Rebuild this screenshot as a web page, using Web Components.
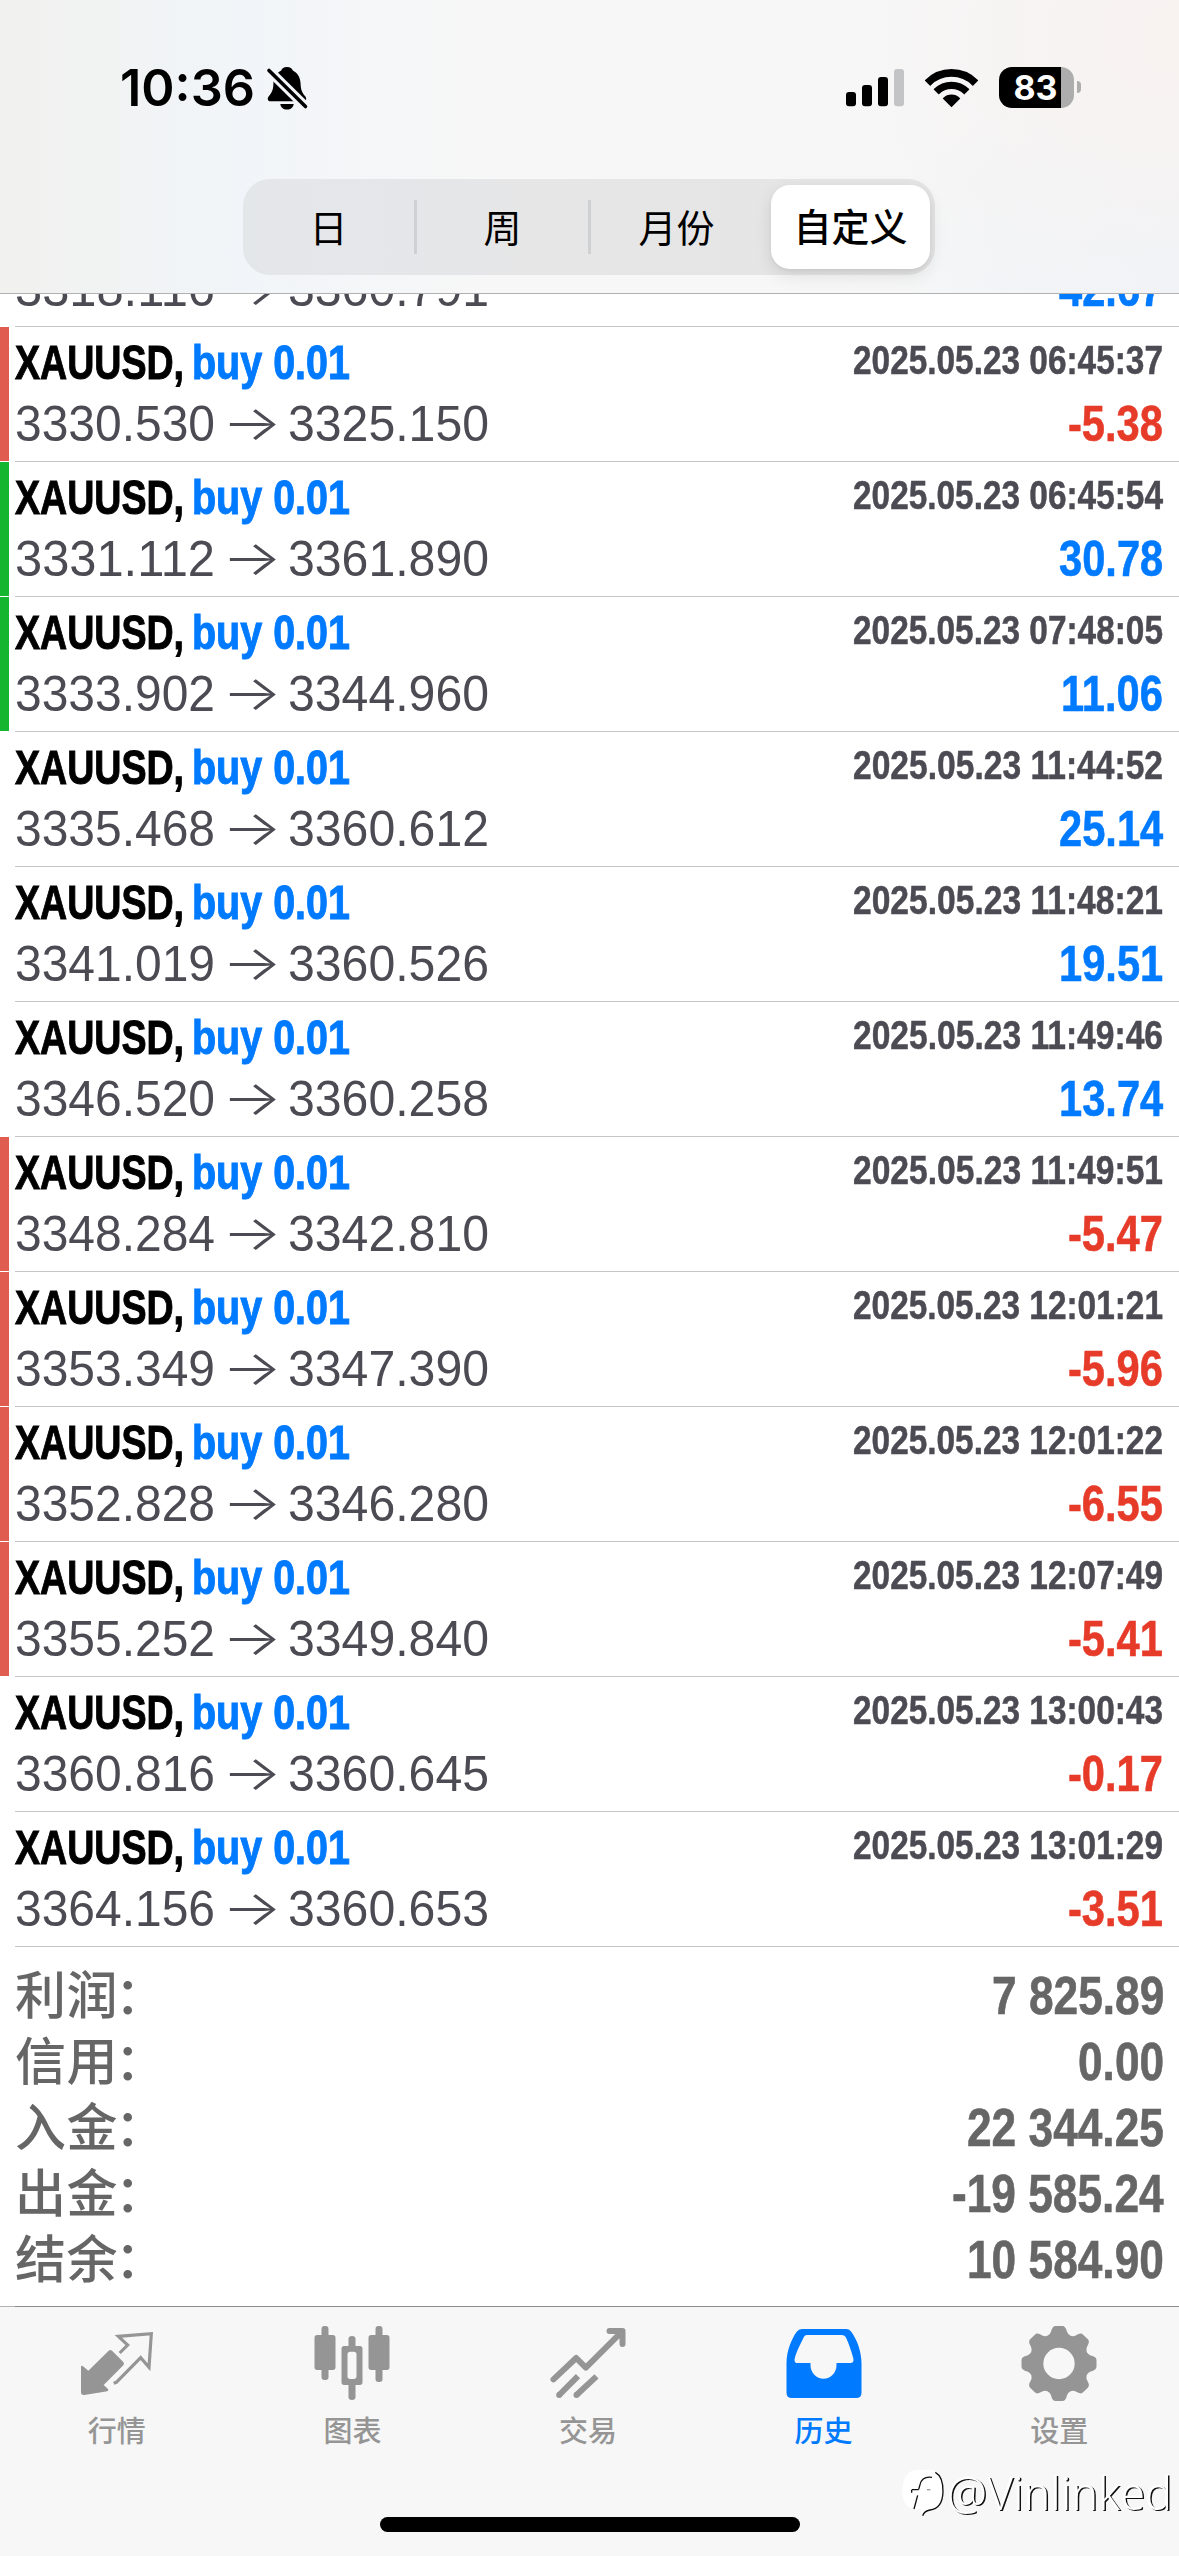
<!DOCTYPE html>
<html lang="zh-CN">
<head>
<meta charset="utf-8">
<title>历史</title>
<style>
html,body{margin:0;padding:0;background:#fff}
body{width:1179px;height:2556px;overflow:hidden;font-family:"Liberation Sans","Noto Sans CJK SC",sans-serif}
</style>
</head>
<body>
<history-app></history-app>
<script>
const define = (name, html, setup) => {
  const t = document.createElement('template');
  t.innerHTML = html;
  customElements.define(name, class extends HTMLElement {
    connectedCallback() {
      if (this.shadowRoot) return;
      const root = this.attachShadow({ mode: 'open' });
      root.append(t.content.cloneNode(true));
      if (setup) setup(this, root);
    }
  });
};

/* Condensed text: squeezes its slotted text by the factor k, box included. */
define('fit-text', `<style>
:host{display:inline-block;white-space:pre}
span{display:inline-block;transform-origin:0 50%}
</style><span><slot></slot></span>`, (el, root) => {
  const s = root.querySelector('span');
  const natural = s.getBoundingClientRect().width;
  const k = el.hasAttribute('w') ? el.getAttribute('w') / natural : +el.getAttribute('k');
  el.style.width = natural * k + 'px';
  s.style.transform = `scaleX(${k})`;
});

define('status-bar', `<style>
:host{display:flex;padding:58px 0 0 120px;height:58px;align-items:flex-start}
.time{font:600 51px/60px Inter,sans-serif;color:#000;width:142px;height:60px}
svg{display:block}
.bell{margin:4px 0 0 0}
.right{display:flex;margin-left:auto;padding:7px 98px 0 0}
.bat{display:flex;margin-left:20px;margin-top:2px}
.cell{width:75px;height:41px;border-radius:13px;background:linear-gradient(90deg,#000 62px,#adadad 62px);color:#fff;font:700 34px/41px Inter,sans-serif;text-align:center;box-sizing:border-box;padding-right:2px}
.cap{width:4px;height:12px;margin:14px 0 0 3px;border-radius:0 4px 4px 0;background:#adadad}
</style>
<div class="time"><fit-text w="135">10:36</fit-text></div>
<svg class="bell" width="50" height="52" viewBox="262 62 50 52"><defs><mask id="m"><rect x="262" y="62" width="50" height="52" fill="#fff"/><path d="M262 63.5L314 115" stroke="#000" stroke-width="9.5"/></mask></defs>
<g mask="url(#m)"><path d="M287 67C283.8 67 281.6 68.6 281.2 70.6C275.5 73.4 273.6 78.5 273.4 84C273.2 90.5 271.5 93 269 96C266.6 99 268 101.3 270.8 101.3H303.2C306 101.3 307.4 99 305 96C302.500 93 300.800 90.500 300.600 84C300.400 78.500 298.500 73.400 292.800 70.600C292.400 68.600 290.200 67 287 67Z"/><path d="M280.300 104H293.700C293.300 107.400 290.800 109.600 287 109.600S280.700 107.400 280.300 104Z"/></g>
<path d="M269 70.500L305.500 106.500" stroke="#000" stroke-width="3.600" stroke-linecap="round"/></svg>
<div class="right">
<svg width="134" height="46" viewBox="845 65 134 46">
<rect x="846" y="92" width="10" height="14.300" rx="3"/><rect x="862" y="85" width="10" height="21.300" rx="3"/><rect x="878" y="77" width="10" height="29.300" rx="3"/><rect x="894" y="69" width="10" height="37.300" rx="3" fill="#c3c4c5"/>
<clipPath id="w"><path d="M951.500 107.300L925 80.800Q923 69 938 60H965Q980 69 978 80.800Z"/></clipPath>
<g clip-path="url(#w)"><circle cx="951.500" cy="106.300" r="11.800"/><g fill="none" stroke="#000"><circle cx="951.500" cy="106.300" r="21" stroke-width="7.300"/><circle cx="951.500" cy="106.300" r="33.400" stroke-width="7.800"/></g></g>
</svg>
<div class="bat"><div class="cell">83</div><div class="cap"></div></div>
</div>`);

define('segmented-control', `<style>
:host{display:grid;grid-template-columns:174px 174px 174px 170px;width:692px;height:96px;margin:63px auto 0 243px;border-radius:27px;background:linear-gradient(90deg,#e4e7ea,#e5e6e8 30%,#e6e6e6 45%,#e5e5e6);align-items:center;color:#000;font:400 38px/51px "Noto Sans CJK SC",sans-serif}
div{display:flex;justify-content:center;height:54px;box-sizing:border-box;border-right:3px solid transparent}
div.line{border-color:#cfd0d2}
div.on{height:84px;border:0;width:159px;justify-self:end;margin-right:5px;border-radius:19px;background:#fff;line-height:80px;font-weight:500;box-shadow:0 6px 18px rgba(0,0,0,.1),0 2px 4px rgba(0,0,0,.05)}
</style>
<div class="line">日</div><div class="line">周</div><div>月份</div><div class="on">自定义</div>`);

define('app-header', `<style>
:host{display:flex;flex-direction:column;height:293px;border-bottom:1px solid #b1b1b2;
background:radial-gradient(circle 330px at 1179px 40px,#f8f2f0,#f8f2f000),radial-gradient(ellipse 300px 200px at 1179px 260px,#eef3f8,#eef3f800),linear-gradient(90deg,#f1f1ef 0,#f1f3f3 110px,#f1f5f9 240px,#f4f6f8 350px,#f7f7f7 480px,#f7f7f7 820px,#f4f5f6 1179px)}
</style><status-bar></status-bar><segmented-control></segmented-control>`);

define('deal-row', `<style>
:host{display:flex;height:135px;flex:none;background:#fff}
:host([partial]){height:33px;overflow:hidden;align-items:flex-end}
:host([partial]) .a{display:none}
:host([partial]) .body{height:70px}
i{width:9px;height:134px;flex:none;margin-right:6px;background:var(--mark,transparent)}
.body{flex:1;border-bottom:1px solid #c6c6c8;padding-right:16px;font-size:50px}
.a,.b{display:flex;justify-content:space-between;height:60px;align-items:flex-start}
.a{padding-top:4px;line-height:60px;font-weight:700;color:#000;font-size:49px}
.t{display:flex}
.sym,.side{-webkit-text-stroke:1px currentColor;margin-top:1px}
.side{color:#007aff;margin-left:8px}
.date{font-size:40px;line-height:58px;color:#4c4b53;-webkit-text-stroke:.5px currentColor}
.b{line-height:66px;color:#4c4b53}
.b .t{font-weight:400}
.arrow{font-family:Inter,sans-serif;font-weight:300;font-size:48px;margin:-1px 6px 0 7px}
.v{font-weight:700;-webkit-text-stroke:.6px currentColor}
</style><i></i><div class="body">
<div class="a"><div class="t"><fit-text class="sym" w="169"></fit-text><fit-text class="side" w="158"></fit-text></div><fit-text class="date" w="310"></fit-text></div>
<div class="b"><div class="t"><fit-text class="p1" w="200"></fit-text><fit-text class="arrow" w="60">→</fit-text><fit-text class="p2" w="201"></fit-text></div><fit-text class="v" k=".833"></fit-text></div>
</div>`, (el, root) => {
  const set = (sel, text) => {
    const old = root.querySelector(sel), n = old.cloneNode();
    n.textContent = text;
    old.replaceWith(n);
  };
  const v = el.getAttribute('profit');
  if (el.hasAttribute('partial')) {
    root.querySelector('.a').remove();
  } else {
    set('.sym', 'XAUUSD,');
    set('.side', 'buy 0.01');
    set('.date', '2025.05.23 ' + el.getAttribute('time'));
  }
  set('.p1', el.getAttribute('open-price'));
  set('.p2', el.getAttribute('close-price'));
  set('.v', v);
  root.querySelector('.v').style.color = v[0] === '-' ? '#e73b2a' : '#007aff';
  const mark = { sl: '#e05c50', tp: '#16b530' }[el.getAttribute('mark')];
  if (mark) el.style.setProperty('--mark', mark);
});

define('deal-list', `<style>
:host{display:flex;flex-direction:column;height:1653px;overflow:hidden}
</style>`, (el, root) => {
  [
    ['3318.116', '3360.791', '', '42.67', ''],
    ['3330.530', '3325.150', '06:45:37', '-5.38', 'sl'],
    ['3331.112', '3361.890', '06:45:54', '30.78', 'tp'],
    ['3333.902', '3344.960', '07:48:05', '11.06', 'tp'],
    ['3335.468', '3360.612', '11:44:52', '25.14', ''],
    ['3341.019', '3360.526', '11:48:21', '19.51', ''],
    ['3346.520', '3360.258', '11:49:46', '13.74', ''],
    ['3348.284', '3342.810', '11:49:51', '-5.47', 'sl'],
    ['3353.349', '3347.390', '12:01:21', '-5.96', 'sl'],
    ['3352.828', '3346.280', '12:01:22', '-6.55', 'sl'],
    ['3355.252', '3349.840', '12:07:49', '-5.41', 'sl'],
    ['3360.816', '3360.645', '13:00:43', '-0.17', ''],
    ['3364.156', '3360.653', '13:01:29', '-3.51', '']
  ].forEach(([o, c, t, p, m]) => {
    const r = document.createElement('deal-row');
    r.setAttribute('open-price', o);
    r.setAttribute('close-price', c);
    r.setAttribute('time', t);
    r.setAttribute('profit', p);
    r.setAttribute('mark', m);
    if (!t) r.setAttribute('partial', '');
    root.append(r);
  });
});

define('account-summary', `<style>
:host{display:block;height:359px;box-sizing:border-box;padding:16px 15px 0;color:#666}
div{display:flex;justify-content:space-between;height:66px}
span{font:500 51px/59px "Noto Sans CJK SC",sans-serif;letter-spacing:.5px}
b{font-weight:500;margin-left:-3px}
fit-text{font:700 53px/66px "Liberation Sans",sans-serif;-webkit-text-stroke:.6px currentColor}
</style>
<div><span>利润<b>：</b></span><fit-text k=".835">7 825.89</fit-text></div>
<div><span>信用<b>：</b></span><fit-text k=".835">0.00</fit-text></div>
<div><span>入金<b>：</b></span><fit-text k=".835">22 344.25</fit-text></div>
<div><span>出金<b>：</b></span><fit-text k=".835">-19 585.24</fit-text></div>
<div><span>结余<b>：</b></span><fit-text k=".835">10 584.90</fit-text></div>`);

define('tab-item', `<style>
:host{display:flex;flex-direction:column;align-items:center;color:#959595;font:500 29px/38px "Noto Sans CJK SC",sans-serif}
:host([active]){color:#007aff}
::slotted(svg){display:block;width:90px;height:90px}
</style><slot name="icon"></slot><span><slot></slot></span>`);

define('water-mark', `<style>
:host{display:flex;position:absolute;left:902px;top:162px;align-items:flex-start}
svg{display:block;margin-top:2px;flex:none}
fit-text{font:300 46px/54px "Noto Sans","Open Sans",sans-serif;color:#fff;text-shadow:1.5px 1px .5px #111;margin:-3px 0 0 1px}
</style>
<svg width="44" height="50" viewBox="428 546 132 150"><path d="M470 546H520Q552 560 552 610Q552 660 512 667Q498 670 490 684L484 664Q430 668 429 612Q429 550 470 546Z" fill="#fff"/><path d="M528 553Q552 566 551 612Q549 662 512 666Q495 669 490 683M518 568Q488 564 482 590L478 604M457 605H478M457 614V606M475 622L464 663" fill="none" stroke="#111" stroke-width="4"/><path d="M503 605H513" stroke="#999" stroke-width="4"/></svg>
<fit-text w="225">@Vinlinked</fit-text>`);

define('tab-bar', `<style>
:host{display:flex;flex-direction:column;position:relative;height:250px;background:#f7f7f7}
.rule{height:1px;background:linear-gradient(90deg,#b2b2b2 15px,#8b8b8c 15px)}
nav{display:grid;grid-template-columns:repeat(5,1fr);width:1178px;margin:13px 0 0 -1px;height:197px}
.home{width:420px;height:15px;border-radius:8px;background:#000;margin:0 auto}
</style><div class="rule"></div>
<nav>
<tab-item><svg slot="icon" viewBox="216 90 270 270" fill="currentColor"><path d="M326 182Q331 178 336 182L370 216Q374 221 370 226L311 285L324 297Q327 301 322 304L253 315Q243 316 243 307V231Q244 225 249 229L265 242Z"/><path d="M359 189L383 165L355 139L454 131L447 232L422 203L349 277L341 280" fill="none" stroke="currentColor" stroke-width="9.500" stroke-linejoin="miter"/></svg>行情</tab-item>
<tab-item><svg slot="icon" viewBox="922.5 90 270 270" fill="currentColor"><rect x="945" y="135" width="63" height="105" rx="8"/><rect x="966" y="108" width="21" height="162" rx="9"/><path fill-rule="evenodd" d="M1034 168H1081Q1089 168 1089 176V277Q1089 285 1081 285H1034Q1026 285 1026 277V176Q1026 168 1034 168ZM1052 185Q1044 185 1044 193V259Q1044 267 1052 267H1063Q1071 267 1071 259V193Q1071 185 1063 185Z"/><path d="M1047 170V147Q1047 138 1057.500 138T1068 147V170ZM1047 283V321Q1047 330 1057.500 330T1068 321V283Z"/><rect x="1107" y="135" width="63" height="105" rx="8"/><rect x="1128" y="108" width="21" height="168" rx="9"/></svg>图表</tab-item>
<tab-item><svg slot="icon" viewBox="370.500 90 270 270" fill="none" stroke="currentColor" stroke-width="18" stroke-linejoin="round"><path stroke-linecap="round" d="M402 268L470 204L499 233L605 127M570 123H609V162"/><path d="M419 315L475.500 258.500M471 315L531 259"/><g fill="currentColor" stroke="none"><circle cx="419" cy="315" r="9"/><circle cx="471" cy="315" r="9"/></g></svg>交易</tab-item>
<tab-item active><svg slot="icon" viewBox="55.500 90 270 270" fill="currentColor"><path fill-rule="evenodd" d="M78 220C78 180 95 145 108 126Q115 117 124 117H258Q267 117 273 126C290 150 303 185 303 220V308Q303 324 287 324H94Q78 324 78 308ZM130 141Q133 135 139 135H243Q252 135 256 142C266 163 275 190 279 208Q280 219 270 219H228V226A39 40 0 0 1 150 226V219H111Q102 219 102 209C106 188 119 164 130 141Z"/></svg>历史</tab-item>
<tab-item><svg slot="icon" viewBox="763.500 90 270 270" fill="currentColor"><defs><path id="tooth" d="M-34.500 -80V-83Q-26 -88 -24 -95Q-20 -112.500 -10 -112.500H10Q20 -112.500 24 -95Q26 -88 34.500 -83V-80Z"/></defs><g transform="translate(898.500 220.500)"><circle r="67.500" fill="none" stroke="currentColor" stroke-width="41"/><use href="#tooth"/><use href="#tooth" transform="rotate(45)"/><use href="#tooth" transform="rotate(90)"/><use href="#tooth" transform="rotate(135)"/><use href="#tooth" transform="rotate(180)"/><use href="#tooth" transform="rotate(225)"/><use href="#tooth" transform="rotate(270)"/><use href="#tooth" transform="rotate(315)"/></g></svg>设置</tab-item>
</nav>
<div class="home"></div><water-mark></water-mark>`);

define('history-app', `<style>
:host{display:flex;flex-direction:column;width:1179px;height:2556px;background:#fff;overflow:hidden}
</style><app-header></app-header><deal-list></deal-list><account-summary></account-summary><tab-bar></tab-bar>`);
</script>
</body>
</html>
